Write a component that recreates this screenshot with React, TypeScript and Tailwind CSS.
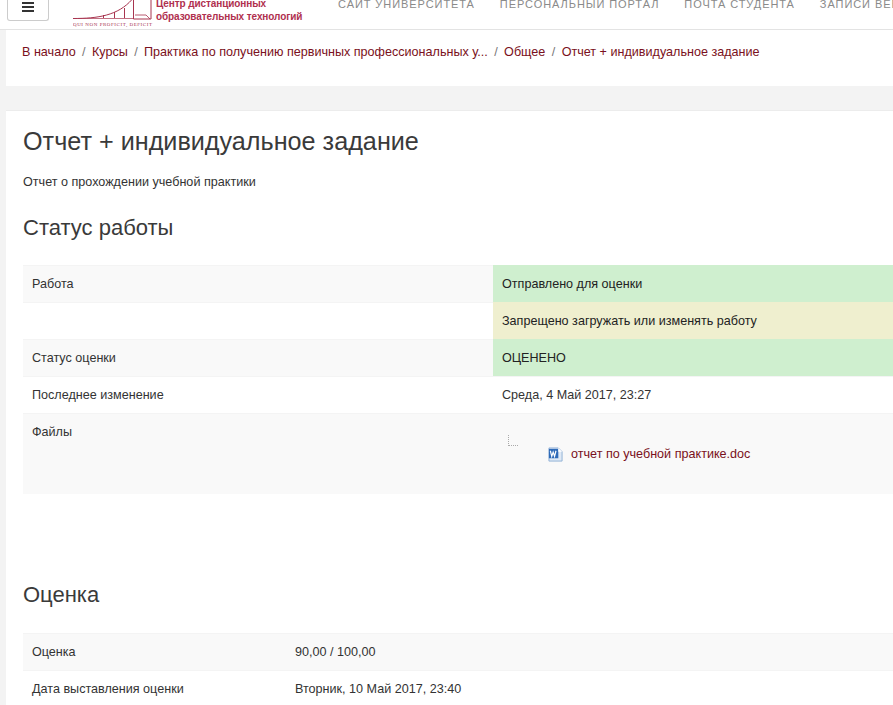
import React from "react";

const Crumb = ({ children }: { children: React.ReactNode }) => (
  <span className="text-[#7a1020]">{children}</span>
);
const Sep = () => <span className="mx-[6.4px] text-[#777777]">/</span>;

const Row = ({
  label,
  children,
  shade,
  w = "w-[470px]",
  status,
  h = "h-[37px]",
}: {
  label?: string;
  children?: React.ReactNode;
  shade?: boolean;
  w?: string;
  status?: "green" | "yellow";
  h?: string;
}) => {
  const valueClass =
    status === "green"
      ? "border-transparent bg-[#cfefcf] text-[#222222]"
      : status === "yellow"
        ? "border-transparent bg-[#efefcf] text-[#222222]"
        : "border-[#f4f4f4]";
  return (
    <div className={`flex ${h} ${shade ? "bg-[#f9f9f9]" : "bg-white"}`}>
      <div className={`${w} shrink-0 border-t border-[#f4f4f4] pl-[9px] pt-[9px]`}>{label}</div>
      <div className={`flex-1 border-t pl-[9px] pt-[9px] ${valueClass}`}>{children}</div>
    </div>
  );
};

const NavLink = ({ children }: { children: React.ReactNode }) => (
  <span className="text-[11px] tracking-[0.93px] text-[#8a8a8a] whitespace-nowrap">{children}</span>
);

const WordIcon = () => (
  <svg width="15" height="15" viewBox="0 0 16 16" className="shrink-0">
    <path d="M1 1h10l4 4v10H1z" fill="#dfe9f5" stroke="#8fb0d6" />
    <rect x="1" y="2" width="10" height="10" fill="#2f6bb8" />
    <path d="M2.500 4l1.500 6 1.500-4.500 1.500 4.500 1.500-6" fill="none" stroke="#ffffff" strokeWidth="1.300" />
    <path d="M11 1l4 4h-4z" fill="#ffffff" />
  </svg>
);

const Logo = () => (
  <svg width="83" height="30" viewBox="0 0 83 30" className="shrink-0">
    <g fill="none" stroke="#a8344f" strokeWidth="1">
      <path d="M0 18.500c25 0 45-3 59-19" />
      <path d="M0 18.500h60" strokeWidth="0.700" />
      <path d="M30.500 18v-3M41.500 18v-6M51.500 18v-10" />
      <path d="M60.500 0v19h17.500V0" />
      <path d="M62 15h11l4 4" strokeWidth="0.800" />
    </g>
    <text x="0" y="26" fontSize="5" fill="#a8344f" fontFamily="'Liberation Serif', serif" textLength="79">QUI NON PROFICIT, DEFICIT</text>
  </svg>
);

export default function App() {
  return (
    <div className="h-[705px] w-[893px] overflow-hidden bg-[#f3f3f3] font-['Liberation_Sans',Arial,sans-serif] text-[12.6px] text-[#333333]">
      <header className="flex h-[30px] overflow-hidden border-b border-[#e3e3e3] bg-white">
        <div className="ml-[7px] flex h-[21px] w-[42px] shrink-0 justify-center rounded-b-[3px] border border-t-0 border-[#cccccc] bg-white pt-[2px]">
          <div className="flex h-[10px] w-[12px] flex-col justify-between">
            <div className="h-[2px] bg-[#333333]" />
            <div className="h-[2px] bg-[#333333]" />
            <div className="h-[2px] bg-[#333333]" />
          </div>
        </div>
        <div className="ml-[24px] h-[30px] shrink-0">
          <Logo />
        </div>
        <div className="mt-[-3px] flex w-[146px] shrink-0 flex-col text-[10px] font-bold leading-[13px] tracking-[-0.1px] text-[#b0304f]">
          <div className="whitespace-nowrap">Центр дистанционных</div>
          <div className="whitespace-nowrap">образовательных технологий</div>
        </div>
        <nav className="ml-[36px] mt-[-2px] flex gap-[25px] leading-[12px]">
          <NavLink>САЙТ УНИВЕРСИТЕТА</NavLink>
          <NavLink>ПЕРСОНАЛЬНЫЙ ПОРТАЛ</NavLink>
          <NavLink>ПОЧТА СТУДЕНТА</NavLink>
          <NavLink>ЗАПИСИ ВЕБИНАРОВ</NavLink>
        </nav>
      </header>

      <section className="ml-[6px] h-[56px] bg-white pl-[16px] pt-[15px] leading-[15px]">
        <Crumb>В начало</Crumb>
        <Sep />
        <Crumb>Курсы</Crumb>
        <Sep />
        <Crumb>Практика по получению первичных профессиональных у...</Crumb>
        <Sep />
        <Crumb>Общее</Crumb>
        <Sep />
        <Crumb>Отчет + индивидуальное задание</Crumb>
      </section>

      <main className="ml-[6px] mt-[24px] h-[600px] border-t border-[#ececec] bg-white pl-[17px]">
        <h2 className="pt-[16px] text-[25.2px] leading-[28px] text-[#3a3a3a]">Отчет + индивидуальное задание</h2>
        <p className="mt-[20px] leading-[15px]">Отчет о прохождении учебной практики</p>
        <h3 className="mt-[25px] text-[22px] leading-[25px] text-[#3a3a3a]">Статус работы</h3>
        <div className="mt-[25px]">
          <Row label="Работа" shade status="green">Отправлено для оценки</Row>
          <Row status="yellow">Запрещено загружать или изменять работу</Row>
          <Row label="Статус оценки" shade status="green">ОЦЕНЕНО</Row>
          <Row label="Последнее изменение">Среда, 4 Май 2017, 23:27</Row>
          <Row label="Файлы" shade h="h-[81px]">
            <div className="ml-[6px] mt-[12px] h-[11px] w-[10px] border-b border-l border-dotted border-[#aaaaaa]" />
            <div className="ml-[46px] mt-[-1px] flex items-center gap-[8px]">
              <WordIcon />
              <span className="text-[#7a1020]">отчет по учебной практике.doc</span>
            </div>
          </Row>
        </div>
        <h3 className="mt-[88px] text-[22px] leading-[25px] text-[#3a3a3a]">Оценка</h3>
        <div className="mt-[26px]">
          <Row label="Оценка" shade w="w-[263px]">90,00 / 100,00</Row>
          <Row label="Дата выставления оценки" w="w-[263px]">Вторник, 10 Май 2017, 23:40</Row>
        </div>
      </main>
    </div>
  );
}
